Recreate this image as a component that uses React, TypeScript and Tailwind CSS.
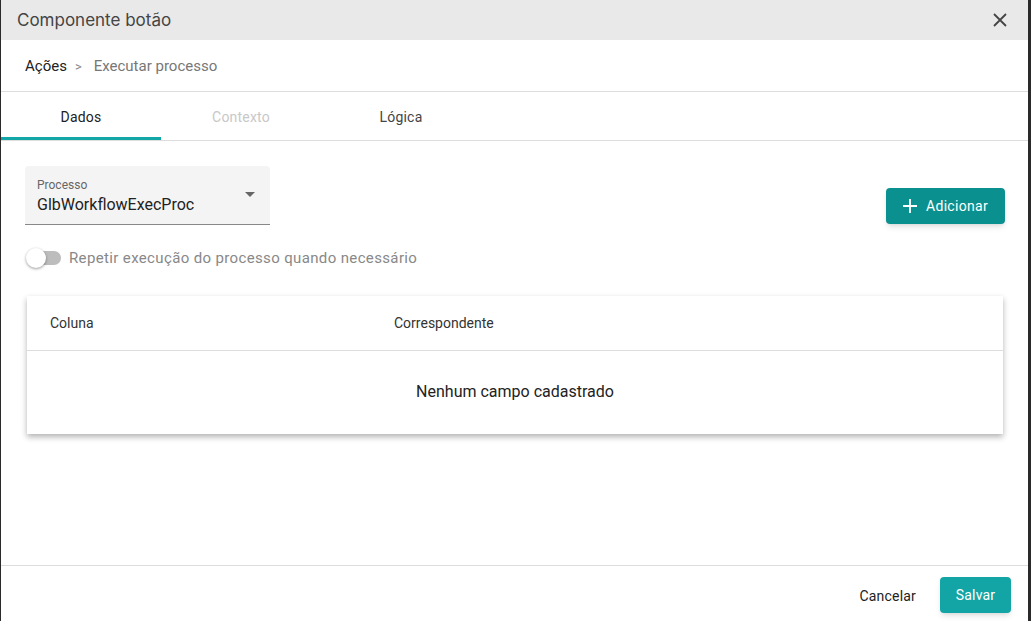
import { useState } from "react";

const tabs = ["Dados", "Contexto", "Lógica"];

const App: React.FC = () => {
  const [active] = useState(0);
  const [repeat, setRepeat] = useState(false);

  return (
    <div className="h-[621px] w-[1031px] overflow-hidden bg-[#2a2a2a] pl-px pr-[3px]" style={{ fontFamily: "Roboto, sans-serif" }}>
      <div className="flex h-[621px] flex-col bg-white">
        <div className="flex h-10 shrink-0 items-center justify-between bg-[#e9e9e9] pl-4 pr-5">
          <h2 className="pt-px text-[17px] text-[#444]" style={{ fontFamily: "Inter, sans-serif" }}>
            Componente botão
          </h2>
          <button type="button" className="text-[#444]">
            <svg width="16" height="16" viewBox="0 0 16 16" fill="none" stroke="currentColor" strokeWidth="1.8">
              <path d="M2 2L14 14M14 2L2 14" />
            </svg>
          </button>
        </div>

        <div className="flex h-[52px] shrink-0 items-center border-b border-[#ddd] px-6 pt-[2px] text-[15px]">
          <span className="text-[#222]">Ações</span>
          <span className="ml-[8px] mr-[12px] text-[13px] text-[#888]">&gt;</span>
          <span className="text-[#777]">Executar processo</span>
        </div>

        <div className="flex h-[49px] shrink-0 border-b border-[#ddd]">
          {tabs.map((tab, i) => (
            <div
              key={tab}
              className={
                i === active
                  ? "flex w-40 items-center justify-center border-b-[3px] border-[#13a6a6] pt-[5px] text-sm tracking-[0.2px] text-[#222]"
                  : i === 1
                    ? "flex w-40 items-center justify-center pt-[2px] text-sm tracking-[0.2px] text-[#c8c8c8]"
                    : "flex w-40 items-center justify-center pt-[2px] text-sm tracking-[0.2px] text-[#444]"
              }
            >
              {tab}
            </div>
          ))}
        </div>

        <div className="flex-1 pl-6 pr-[23px] pt-[25px]">
          <div className="flex items-start justify-between">
            <div className="relative h-[59px] w-[245px] rounded-t border-b border-[#888] bg-[#f4f4f4] px-3 pt-[11px]">
              <div className="text-xs text-[#666]">Processo</div>
              <div className="text-base text-[#222]">GlbWorkflowExecProc</div>
              <div className="absolute right-[15px] top-[26px] h-0 w-0 border-x-[5px] border-t-[5px] border-x-transparent border-t-[#666]" />
            </div>
            <button
              type="button"
              className="mt-[22px] flex h-9 w-[119px] items-center justify-center gap-2 rounded bg-[#0b9090] pr-px text-sm tracking-[0.3px] text-white shadow-md"
            >
              <svg width="16" height="16" viewBox="0 0 16 16" stroke="currentColor" strokeWidth="1.8">
                <path d="M8 1V15M1 8H15" />
              </svg>
              Adicionar
            </button>
          </div>

          <label className="mt-[22px] flex cursor-pointer items-center gap-[8px] pl-[2px]" onClick={() => setRepeat(!repeat)}>
            <span className="relative inline-block h-[14px] w-[34px] rounded-full bg-[#bdbdbd]">
              <span className="absolute left-[-1px] top-[-3px] h-5 w-5 rounded-full bg-white shadow-[0_1px_3px_rgba(0,0,0,0.4)]" />
            </span>
            <span className="text-[15px] tracking-[0.36px] text-[#888]">Repetir execução do processo quando necessário</span>
          </label>

          <div className="ml-[2px] mt-[26px] w-[976px] bg-white shadow-[0_3px_6px_rgba(0,0,0,0.3)]">
            <div className="flex h-[55px] items-center border-b border-[#ddd] text-sm text-[#333]">
              <div className="w-[367px] pl-[23px]">Coluna</div>
              <div>Correspondente</div>
            </div>
            <div className="flex h-[83px] items-center justify-center text-base text-[#222]">Nenhum campo cadastrado</div>
          </div>
        </div>

        <div className="flex h-[56px] shrink-0 items-start justify-end gap-6 border-t border-[#ddd] pr-[17px] pt-[11px]">
          <button type="button" className="ml-px mt-[9px] text-sm tracking-[0.2px] text-[#222]">
            Cancelar
          </button>
          <button type="button" className="h-9 w-[71px] rounded bg-[#13a5a5] text-sm tracking-[0.2px] text-white shadow-md">
            Salvar
          </button>
        </div>
      </div>
    </div>
  );
};

export default App;
